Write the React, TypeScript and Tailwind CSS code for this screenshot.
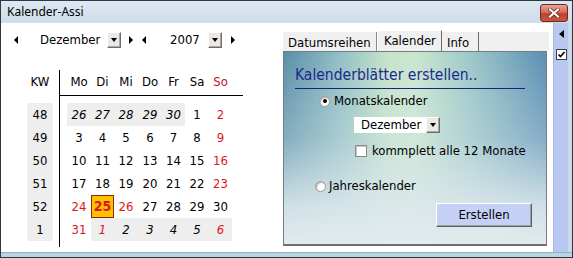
import React from "react";

const UI = "font-['DejaVu_Sans_Condensed','DejaVu_Sans',sans-serif]";

function TriLeft() {
  return <div className="w-0 h-0 border-y-[4px] border-y-transparent border-r-[4px] border-r-black" />;
}
function TriLeftBig() {
  return <div className="w-0 h-0 border-y-[4.5px] border-y-transparent border-r-[5px] border-r-black" />;
}
function TriRight() {
  return <div className="w-0 h-0 border-y-[4px] border-y-transparent border-l-[4px] border-l-black" />;
}
function DropBtn() {
  return (
    <div className="w-[14px] h-[16px] bg-[#ece9e4] border border-t-white border-l-white border-b-[#6d6d6d] border-r-[#6d6d6d] shadow-[inset_-1px_-1px_0_#a8a8a8] flex items-center justify-center">
      <div className="w-0 h-0 border-x-[3.5px] border-x-transparent border-t-[4px] border-t-black" />
    </div>
  );
}

type Cell = { t: string; red?: boolean; it?: boolean; gray?: boolean; hi?: boolean };

const rows: { kw: string; cells: Cell[] }[] = [
  {
    kw: "48",
    cells: [
      { t: "26", it: true, gray: true },
      { t: "27", it: true, gray: true },
      { t: "28", it: true, gray: true },
      { t: "29", it: true, gray: true },
      { t: "30", it: true, gray: true },
      { t: "1" },
      { t: "2", red: true },
    ],
  },
  { kw: "49", cells: ["3", "4", "5", "6", "7", "8"].map((t) => ({ t })).concat([{ t: "9", red: true } as Cell]) },
  { kw: "50", cells: ["10", "11", "12", "13", "14", "15"].map((t) => ({ t })).concat([{ t: "16", red: true } as Cell]) },
  { kw: "51", cells: ["17", "18", "19", "20", "21", "22"].map((t) => ({ t })).concat([{ t: "23", red: true } as Cell]) },
  {
    kw: "52",
    cells: [
      { t: "24", red: true },
      { t: "25", red: true, hi: true },
      { t: "26", red: true },
      { t: "27" },
      { t: "28" },
      { t: "29" },
      { t: "30" },
    ],
  },
  {
    kw: "1",
    cells: [
      { t: "31", red: true },
      { t: "1", red: true, it: true, gray: true },
      { t: "2", it: true, gray: true },
      { t: "3", it: true, gray: true },
      { t: "4", it: true, gray: true },
      { t: "5", it: true, gray: true },
      { t: "6", red: true, it: true, gray: true },
    ],
  },
];

const widths = ["w-[24px]", "w-[23px]", "w-[24px]", "w-[24px]", "w-[23px]", "w-[24px]", "w-[23px]"];
const heads = ["Mo", "Di", "Mi", "Do", "Fr", "Sa", "So"];

function Radio({ on }: { on?: boolean }) {
  return (
    <div className="w-[11px] h-[11px] rounded-full bg-white border border-[#9a9a9a] shadow-[inset_1px_1px_1px_#b0b0b0] flex items-center justify-center">
      {on && <div className="w-[4px] h-[4px] rounded-full bg-black" />}
    </div>
  );
}

export default function App() {
  return (
    <div className={`w-[573px] h-[258px] border border-[#2b3946] bg-[#c9d8e6] flex flex-col overflow-hidden ${UI}`}>
      {/* title bar */}
      <div className="h-[22px] shrink-0 bg-[linear-gradient(180deg,#dde7f2_0%,#cfdcea_100%)] flex items-center pl-[6px] pr-[4px]">
        <span className="font-['Noto_Sans','Open_Sans',sans-serif] text-[12px] text-black leading-none">Kalender-Assi</span>
        <div className="ml-auto w-[28px] h-[18px] mt-[1px] rounded-[3px] border border-[#6b2a22] bg-[linear-gradient(180deg,#e5a497_0%,#d36f5e_45%,#c2412c_55%,#c9563f_100%)] flex items-center justify-center">
          <svg width="12" height="10" viewBox="0 0 12 10">
            <path d="M2 1.5 L10 8.5 M10 1.5 L2 8.5" stroke="#5a1a12" strokeWidth="3.4" strokeLinecap="square" />
            <path d="M2 1.5 L10 8.5 M10 1.5 L2 8.5" stroke="#ffffff" strokeWidth="2.2" strokeLinecap="square" />
          </svg>
        </div>
      </div>

      {/* body */}
      <div className="flex-1 flex min-h-0">
        <div className="w-[552px] bg-white flex">
          {/* left calendar */}
          <div className="w-[281px] flex flex-col">
            {/* nav row */}
            <div className="mt-[9px] h-[16px] flex items-center text-[13px] text-black">
              <div className="w-[13px]" />
              <TriLeft />
              <div className="w-[22px]" />
              <div className="w-[67px]">Dezember</div>
              <DropBtn />
              <div className="w-[8px]" />
              <TriRight />
              <div className="w-[9px]" />
              <TriLeft />
              <div className="w-[24px]" />
              <div className="w-[38px]">2007</div>
              <DropBtn />
              <div className="w-[9px]" />
              <TriRight />
            </div>

            {/* calendar */}
            <div className="mt-[22px] flex text-[13px]">
              <div className="ml-[26px] w-[26px] flex flex-col">
                <div className="h-[25px] flex items-center justify-center pb-[2px]">KW</div>
                <div className="mt-[8px] bg-[#eeeeee] flex flex-col">
                  {rows.map((r) => (
                    <div key={r.kw} className="h-[23px] flex items-center justify-center">{r.kw}</div>
                  ))}
                </div>
              </div>
              <div className="ml-[6px] w-[184px] h-[177px] border-l border-black flex flex-col">
                <div className="h-[26px] pb-[2px] border-b border-black flex items-center pl-[7px]">
                  {heads.map((h, i) => (
                    <div key={h} className={`${widths[i]} text-center ${h === "So" ? "text-[#c0141c]" : "text-black"}`}>{h}</div>
                  ))}
                </div>
                <div className="mt-[7px] pl-[7px] flex flex-col">
                  {rows.map((r) => (
                    <div key={r.kw} className="h-[23px] flex">
                      {r.cells.map((c, i) => (
                        <div
                          key={i}
                          className={`${widths[i]} h-[23px] flex items-center justify-center ${c.gray ? "bg-[#eeeeee]" : ""} ${c.it ? "italic" : ""} ${c.red ? "text-[#e0141c]" : "text-black"} ${c.hi ? "bg-[#ffc000] border border-[#8a2a00] font-bold text-[14px]" : ""}`}
                        >
                          {c.t}
                        </div>
                      ))}
                    </div>
                  ))}
                </div>
              </div>
            </div>
          </div>

          {/* tab panel */}
          <div className="w-[267px] pt-[7px] flex flex-col">
            <div className="h-[21px] flex items-end text-[13px]">
              <div className="w-[95px] h-[19px] bg-[#f0f0f0] border-l border-white border-r border-r-[#8a8a8a] flex items-center pl-[5px] pt-[2px]">Datumsreihen</div>
              <div className="w-[65px] h-[21px] bg-[#f0f0f0] border-t border-l border-white border-r border-r-[#6a6a6a] flex items-center pl-[6px]">Kalender</div>
              <div className="w-[37px] h-[19px] bg-[#f0f0f0] border-r border-r-[#6a6a6a] flex items-center pl-[5px] pt-[2px]">Info</div>
              <div className="flex-1 h-[19px] bg-[#f0f0f0]" />
            </div>
            <div className="ml-[1px] w-[264px] h-[195px] border-l border-t border-[#6f7f88] border-r border-r-[#7a7a7a] border-b-2 border-b-[#6e6e6e] bg-[image:linear-gradient(180deg,rgba(222,234,238,0)_0%,rgba(214,229,234,0.35)_45%,rgba(220,232,236,0.9)_80%,#e2ebee_100%),linear-gradient(90deg,#5a8fa8_0%,#8fbcc3_20%,#c6e4c9_40%,#cbe7cf_50%,#9cc6c8_72%,#5a8fb4_100%)] flex flex-col pl-[11px]">
              <div className="mt-[14px] w-[230px] pb-[4px] border-b border-[#1a237a] text-[15.5px] text-[#1b2a8c] leading-[18px]">Kalenderblätter erstellen..</div>
              <div className="mt-[4px] ml-[24px] h-[16px] flex items-center gap-[4px] text-[13px] text-black">
                <Radio on />
                <span>Monatskalender</span>
              </div>
              <div className="mt-[8px] ml-[59px] flex items-center h-[16px]">
                <div className="w-[72px] h-[16px] bg-white text-[13px] text-black pl-[7px] leading-[16px]">Dezember</div>
                <DropBtn />
              </div>
              <div className="mt-[11px] ml-[60px] h-[14px] flex items-center gap-[5px] text-[13px] text-black">
                <div className="w-[12px] h-[12px] bg-white border border-[#8a8a8a] shadow-[inset_1px_1px_0_#c8c8c8]" />
                <span>kommplett alle 12 Monate</span>
              </div>
              <div className="mt-[20px] ml-[20px] h-[16px] flex items-center gap-[3px] text-[13px] text-black">
                <Radio />
                <span>Jahreskalender</span>
              </div>
              <div className="mt-[9px] ml-[141px] w-[96px] h-[24px] bg-[#c5d0f7] border border-t-white border-l-white border-b-[#5e5e5e] border-r-[#5e5e5e] shadow-[inset_-1px_-1px_0_#a0a0a0] flex items-center justify-center text-[13px] text-black">
                Erstellen
              </div>
            </div>
          </div>
        </div>

        {/* right strip */}
        <div className="w-[15px] bg-[#b8c8f0] border-l border-[#a9b8dc] flex flex-col items-center pt-[7px]">
          <div className="ml-[1px]"><TriLeftBig /></div>
          <div className="mt-[11px] w-[11px] h-[11px] bg-white border border-[#404040] flex items-center justify-center">
            <svg width="9" height="9" viewBox="0 0 9 9">
              <path d="M1.5 4.5 L3.5 6.5 L7.5 2" stroke="black" strokeWidth="1.6" fill="none" />
            </svg>
          </div>
        </div>
        <div className="w-[4px] bg-[#c9dbe8]" />
      </div>
      <div className="h-[5px] shrink-0 bg-[#b9d6e2] border-t border-[#8fb0c2]" />
    </div>
  );
}
